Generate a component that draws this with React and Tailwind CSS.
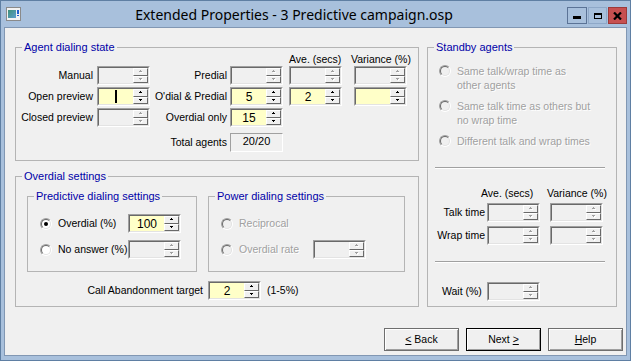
import React from "react";

const dim = "text-[#a0a0a0] [text-shadow:1px_1px_0_#fff]";

function Arrow({ up, disabled }) {
  const fill = disabled ? "#a0a0a0" : "#000";
  return (
    <svg width="5" height="3" viewBox="0 0 5 3" shapeRendering="crispEdges">
      {disabled && (
        <g fill="#fff">
          {up ? (
            <>
              <rect x="3" y="1" width="1" height="1" />
              <rect x="2" y="2" width="3" height="1" />
            </>
          ) : (
            <>
              <rect x="2" y="1" width="3" height="1" />
              <rect x="3" y="2" width="1" height="1" />
            </>
          )}
        </g>
      )}
      <g fill={fill}>
        {up ? (
          <>
            <rect x="2" y="0" width="1" height="1" />
            <rect x="1" y="1" width="3" height="1" />
          </>
        ) : (
          <>
            <rect x="1" y="0" width="3" height="1" />
            <rect x="2" y="1" width="1" height="1" />
          </>
        )}
      </g>
    </svg>
  );
}

function SpinBtn({ up, disabled }) {
  return (
    <div className="flex flex-1 items-center justify-center border border-t-white border-l-white border-r-[#696969] border-b-[#696969] bg-[#f0f0f0]">
      <Arrow up={up} disabled={disabled} />
    </div>
  );
}

function Spin({ value, yellow, disabled, caret, className = "" }) {
  return (
    <div
      className={`flex h-[19px] w-[53px] shrink-0 border border-t-[#a0a0a0] border-l-[#a0a0a0] border-r-white border-b-white ${className}`}
    >
      <div
        className={`flex flex-1 border border-t-[#696969] border-l-[#696969] border-r-[#e3e3e3] border-b-[#e3e3e3] ${
          yellow ? "bg-[#ffffc8]" : "bg-[#f0f0f0]"
        }`}
      >
        <div className="flex flex-1 items-center justify-center text-[12px] leading-none">
          {value}
          {caret && <span className="h-[13px] w-[2px] bg-black" />}
        </div>
        <div className="flex w-[15px] flex-col">
          <SpinBtn up disabled={disabled} />
          <SpinBtn disabled={disabled} />
        </div>
      </div>
    </div>
  );
}

function Radio({ checked, disabled }) {
  return (
    <span className="flex h-[12px] w-[12px] shrink-0 rounded-full border border-t-[#a0a0a0] border-l-[#a0a0a0] border-r-white border-b-white">
      <span
        className={`flex flex-1 items-center justify-center rounded-full border border-t-[#696969] border-l-[#696969] border-r-[#e3e3e3] border-b-[#e3e3e3] ${
          disabled ? "bg-[#f0f0f0]" : "bg-white"
        }`}
      >
        {checked && <span className="h-[4px] w-[4px] rounded-full bg-black" />}
      </span>
    </span>
  );
}

function Group({ title, className = "", children }) {
  return (
    <fieldset className={`shrink-0 border border-[#b4b4b4] ${className}`}>
      <legend className="ml-[6px] px-[2px] text-[11px] leading-[12px] text-[#0000a8]">{title}</legend>
      {children}
    </fieldset>
  );
}

function Sep({ className = "" }) {
  return <div className={`ml-[7px] h-[2px] w-[170px] border-t border-b border-t-[#a0a0a0] border-b-white ${className}`} />;
}

function Btn({ children, def }) {
  return (
    <div
      className={`flex h-[23px] w-[75px] items-center justify-center border bg-[#f0f0f0] shadow-[inset_1px_1px_0_#fff,inset_-1px_-1px_0_#a0a0a0] ${
        def ? "border-black" : "border-[#6e6e6e]"
      }`}
    >
      {children}
    </div>
  );
}

function AppIcon() {
  return (
    <svg width="15" height="14" viewBox="0 0 15 14" shapeRendering="crispEdges">
      <defs>
        <linearGradient id="ig" x1="0" y1="0" x2="1" y2="1">
          <stop offset="0" stopColor="#3d8f78" />
          <stop offset="1" stopColor="#5d9fd0" />
        </linearGradient>
      </defs>
      <rect x="0.5" y="0.5" width="14" height="13" fill="#f2f2f2" stroke="#8a8a8a" />
      <rect x="2" y="3" width="8" height="8" fill="url(#ig)" />
      <rect x="11" y="3" width="2" height="4" fill="#1f5fd0" />
      <rect x="11" y="8" width="2" height="1" fill="#1f5fd0" />
    </svg>
  );
}

function TitleBar() {
  return (
    <div className="flex h-[26px] shrink-0 items-center pl-[5px] pr-[3px]">
      <AppIcon />
      <div className="flex-1 text-center font-['Noto_Sans',sans-serif] text-[14px] text-black">
        Extended Properties - 3 Predictive campaign.osp
      </div>
      <div className="mt-[3px] flex">
        <div className="flex h-[17px] w-[20px] items-center justify-center border border-[#5b7396] bg-[#a8c0dc]">
          <span className="mt-[4px] h-[3px] w-[8px] bg-black" />
        </div>
        <div className="ml-[1px] flex h-[17px] w-[19px] items-center justify-center border border-[#8ea8c8] bg-[#a8c0dc]">
          <span className="h-[6px] w-[8px] border-[1.5px] border-t-[2.5px] border-black" />
        </div>
        <div className="ml-[1px] flex h-[17px] w-[19px] items-center justify-center border border-[#9c3a3a] bg-[#c75050]">
          <svg width="9" height="8" viewBox="0 0 9 8">
            <path d="M1 0.5L8 7.5M8 0.5L1 7.5" stroke="#000" strokeWidth="2.2" />
          </svg>
        </div>
      </div>
    </div>
  );
}

export default function App() {
  return (
    <div className="flex h-[361px] w-[631px] flex-col border border-[#5f7fa3] bg-[#a8c0dc] font-['Liberation_Sans',Arial,sans-serif]">
      <TitleBar />
      <div className="mx-[3px] mb-[4px] flex flex-1 flex-col border border-[#8197b3] bg-[#f0f0f0] text-[10.5px] leading-[13px] text-black">
        <div className="flex items-start gap-[8px] pl-[10px] pt-[13px]">
          <div className="flex w-[404px] flex-col">
            <Group title="Agent dialing state" className="w-[404px] pb-[8px]">
              <div className="flex h-[13px] items-center whitespace-nowrap pl-[273px]">
                <span className="w-[62px]">Ave. (secs)</span>
                <span>Variance (%)</span>
              </div>
              <div className="flex flex-col gap-[2px]">
                <div className="flex h-[19px] items-center whitespace-nowrap">
                  <span className="w-[81px] pr-[4px] text-right">Manual</span>
                  <Spin disabled />
                  <span className="w-[80px] pr-[3px] text-right">Predial</span>
                  <Spin disabled />
                  <Spin disabled className="ml-[6px]" />
                  <Spin disabled className="ml-[12px]" />
                </div>
                <div className="flex h-[19px] items-center whitespace-nowrap">
                  <span className="w-[81px] pr-[4px] text-right">Open preview</span>
                  <Spin yellow caret />
                  <span className="w-[80px] pr-[3px] text-right">O'dial &amp; Predial</span>
                  <Spin yellow value="5" />
                  <Spin yellow value="2" className="ml-[6px]" />
                  <Spin yellow className="ml-[12px]" />
                </div>
                <div className="flex h-[19px] items-center whitespace-nowrap">
                  <span className="w-[81px] pr-[4px] text-right">Closed preview</span>
                  <Spin disabled />
                  <span className="w-[80px] pr-[3px] text-right">Overdial only</span>
                  <Spin yellow value="15" />
                </div>
              </div>
              <div className="mt-[6px] flex h-[19px] items-center whitespace-nowrap pl-[134px]">
                <span className="w-[80px] pr-[3px] text-right">Total agents</span>
                <div className="flex h-[19px] w-[53px] justify-center border border-t-[#a0a0a0] border-l-[#a0a0a0] border-r-white border-b-white pt-[1px] text-[11px]">
                  20/20
                </div>
              </div>
            </Group>

            <Group title="Overdial settings" className="mt-[9px] w-[404px] pb-[6px]">
              <div className="mt-[8px] flex gap-[11px] pl-[11px]">
                <Group title="Predictive dialing settings" className="w-[170px] pb-[12px]">
                  <div className="pl-[12px]">
                    <div className="mt-[12px] flex h-[19px] items-center">
                      <Radio checked />
                      <span className="ml-[6px] w-[70px]">Overdial (%)</span>
                      <Spin yellow value="100" />
                    </div>
                    <div className="mt-[7px] flex h-[19px] items-center">
                      <Radio />
                      <span className="ml-[6px] w-[70px] whitespace-nowrap">No answer (%)</span>
                      <Spin disabled />
                    </div>
                  </div>
                </Group>
                <Group title="Power dialing settings" className="w-[197px] pb-[12px]">
                  <div className="pl-[12px]">
                    <div className="mt-[12px] flex h-[19px] items-center">
                      <Radio disabled />
                      <span className={`ml-[6px] ${dim}`}>Reciprocal</span>
                    </div>
                    <div className="mt-[7px] flex h-[19px] items-center">
                      <Radio disabled />
                      <span className={`ml-[6px] w-[74px] ${dim}`}>Overdial rate</span>
                      <Spin disabled />
                    </div>
                  </div>
                </Group>
              </div>
              <div className="mt-[9px] flex h-[19px] items-center whitespace-nowrap">
                <span className="w-[192px] pr-[5px] text-right">Call Abandonment target</span>
                <Spin yellow value="2" />
                <span className="ml-[6px]">(1-5%)</span>
              </div>
            </Group>
          </div>

          <Group title="Standby agents" className="w-[190px] pb-[5px]">
            <div className={`mt-[11px] flex flex-col gap-[7px] pl-[11px] leading-[14px] ${dim}`}>
              <div className="flex items-start">
                <span className="mt-[1px]">
                  <Radio disabled />
                </span>
                <span className="ml-[6px]">
                  Same talk/wrap time as
                  <br />
                  other agents
                </span>
              </div>
              <div className="flex items-start">
                <span className="mt-[1px]">
                  <Radio disabled />
                </span>
                <span className="ml-[6px]">
                  Same talk time as others but
                  <br />
                  no wrap time
                </span>
              </div>
              <div className="flex items-start">
                <span className="mt-[1px]">
                  <Radio disabled />
                </span>
                <span className="ml-[6px]">Different talk and wrap times</span>
              </div>
            </div>
            <Sep className="mt-[19px]" />
            <div className="mt-[18px] flex h-[13px] items-center whitespace-nowrap pl-[53px]">
              <span className="w-[66px]">Ave. (secs)</span>
              <span>Variance (%)</span>
            </div>
            <div className="mt-[3px] flex h-[19px] items-center whitespace-nowrap">
              <span className="w-[59px] pr-[2px] text-right">Talk time</span>
              <Spin disabled />
              <Spin disabled className="ml-[10px]" />
            </div>
            <div className="mt-[4px] flex h-[19px] items-center whitespace-nowrap">
              <span className="w-[59px] pr-[2px] text-right">Wrap time</span>
              <Spin disabled />
              <Spin disabled className="ml-[10px]" />
            </div>
            <Sep className="mt-[16px]" />
            <div className="mt-[19px] flex h-[19px] items-center whitespace-nowrap">
              <span className="w-[59px] pl-[14px]">Wait (%)</span>
              <Spin disabled />
            </div>
          </Group>
        </div>

        <div className="mt-[21px] flex justify-end gap-[7px] pr-[3px]">
          <Btn>
            <span className="underline">&lt;</span>&nbsp;Back
          </Btn>
          <Btn def>
            Next&nbsp;<span className="underline">&gt;</span>
          </Btn>
          <Btn>
            <span className="underline">H</span>elp
          </Btn>
        </div>
      </div>
    </div>
  );
}
